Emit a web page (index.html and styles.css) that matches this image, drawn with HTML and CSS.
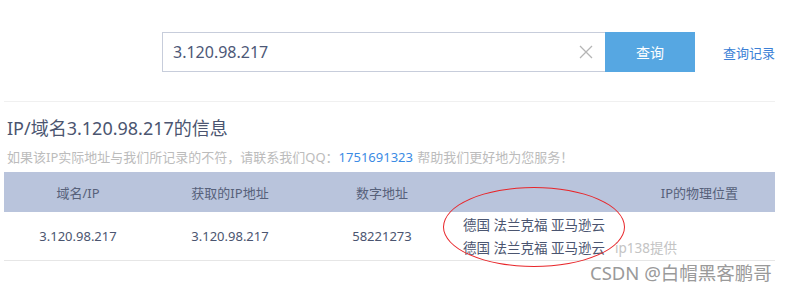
FILE: index.html
```html
<!DOCTYPE html>
<html lang="zh-CN">
<head>
    <meta charset="UTF-8">
    <title>IP查询</title>
    <link rel="stylesheet" href="styles.css">
</head>
<body>
    <div class="page">
        <!-- Search -->
        <div class="search">
            <div class="search-box">
                <span class="search-value">3.120.98.217</span>
                <span class="clear">
                    <svg width="14" height="14" viewBox="0 0 14 14"><path d="M1 1L13 13M13 1L1 13" stroke="#b5b5b5" stroke-width="1.3" fill="none"/></svg>
                </span>
            </div>
            <button class="search-btn">查询</button>
            <a class="history" href="#">查询记录</a>
        </div>

        <div class="divider"></div>

        <h2 class="title">IP/域名3.120.98.217的信息</h2>
        <p class="note">如果该IP实际地址与我们所记录的不符，请联系我们QQ：<span class="qq">1751691323</span> 帮助我们更好地为您服务！</p>

        <!-- Result table -->
        <div class="result">
            <div class="row head">
                <div class="cell c1">域名/IP</div>
                <div class="cell c2">获取的IP地址</div>
                <div class="cell c3">数字地址</div>
                <div class="cell c4 loc-head">IP的物理位置</div>
            </div>
            <div class="row body">
                <div class="cell c1">3.120.98.217</div>
                <div class="cell c2">3.120.98.217</div>
                <div class="cell c3">58221273</div>
                <div class="cell c4 loc">
                    <div>德国 法兰克福 亚马逊云</div>
                    <div>德国 法兰克福 亚马逊云<span class="src">ip138提供</span></div>
                </div>
            </div>
        </div>

        <div class="mark"></div>
        <div class="watermark">CSDN @白帽黑客鹏哥</div>
    </div>
</body>
</html>
```

FILE: styles.css
```css
* {
    margin: 0;
    padding: 0;
    box-sizing: border-box;
}

body {
    background: #fff;
    font-family: "Noto Sans", "Noto Sans CJK SC", sans-serif;
    color: #4b5570;
}

.page {
    position: relative;
    width: 797px;
    height: 292px;
    overflow: hidden;
}

.search {
    display: flex;
    align-items: center;
    padding: 32px 0 0 162px;
}

.search-box {
    width: 443px;
    height: 40px;
    border: 1px solid #c7cddb;
    border-right: none;
    display: flex;
    align-items: center;
    justify-content: space-between;
    padding: 0 12px 0 10px;
}

.search-value {
    font-size: 16px;
    color: #4d5877;
}

.clear {
    display: flex;
    align-items: center;
}

.search-btn {
    width: 90px;
    height: 40px;
    border: none;
    background: #56a7e2;
    color: #fff;
    font-family: inherit;
    font-size: 14px;
}

.history {
    margin-left: 28px;
    font-size: 13px;
    color: #3b7fd6;
    text-decoration: none;
}

.divider {
    margin: 29px 4px 0;
    width: 771px;
    border-top: 1px solid #f0f0f0;
}

.title {
    margin: 14px 0 0 7px;
    font-size: 18px;
    font-weight: normal;
    line-height: 24px;
    color: #4b5570;
}

.note {
    margin: 8px 0 0 7px;
    font-size: 13px;
    line-height: 18px;
    color: #bcbcbc;
    word-spacing: 1px;
}

.qq {
    color: #3b8be4;
}

.result {
    margin: 6px 0 0 4px;
    width: 771px;
}

.row {
    display: flex;
}

.cell {
    text-align: center;
    font-size: 13px;
}

.c1 { width: 148px; }
.c2 { width: 156px; }
.c3 { width: 148px; }
.c4 { flex: 1; }

.head {
    height: 40px;
    align-items: center;
    background: #b9c4dc;
    color: #57617a;
}

.loc-head {
    text-align: right;
    padding-right: 37px;
}

.body {
    height: 49px;
    align-items: center;
    border-bottom: 1px solid #e6e6e6;
    color: #4b5570;
}

.loc {
    text-align: left;
    padding: 2px 0 0 7px;
    line-height: 23px;
    font-size: 13.5px;
}

.src {
    margin-left: 10px;
    color: #c4c4c4;
}

.mark {
    position: absolute;
    left: 443px;
    top: 187px;
    width: 182px;
    height: 80px;
    border: 1px solid #e8262a;
    border-radius: 50%;
}

.watermark {
    position: absolute;
    left: 590px;
    top: 259px;
    font-size: 18.5px;
    color: #9a9a9a;
}
```
